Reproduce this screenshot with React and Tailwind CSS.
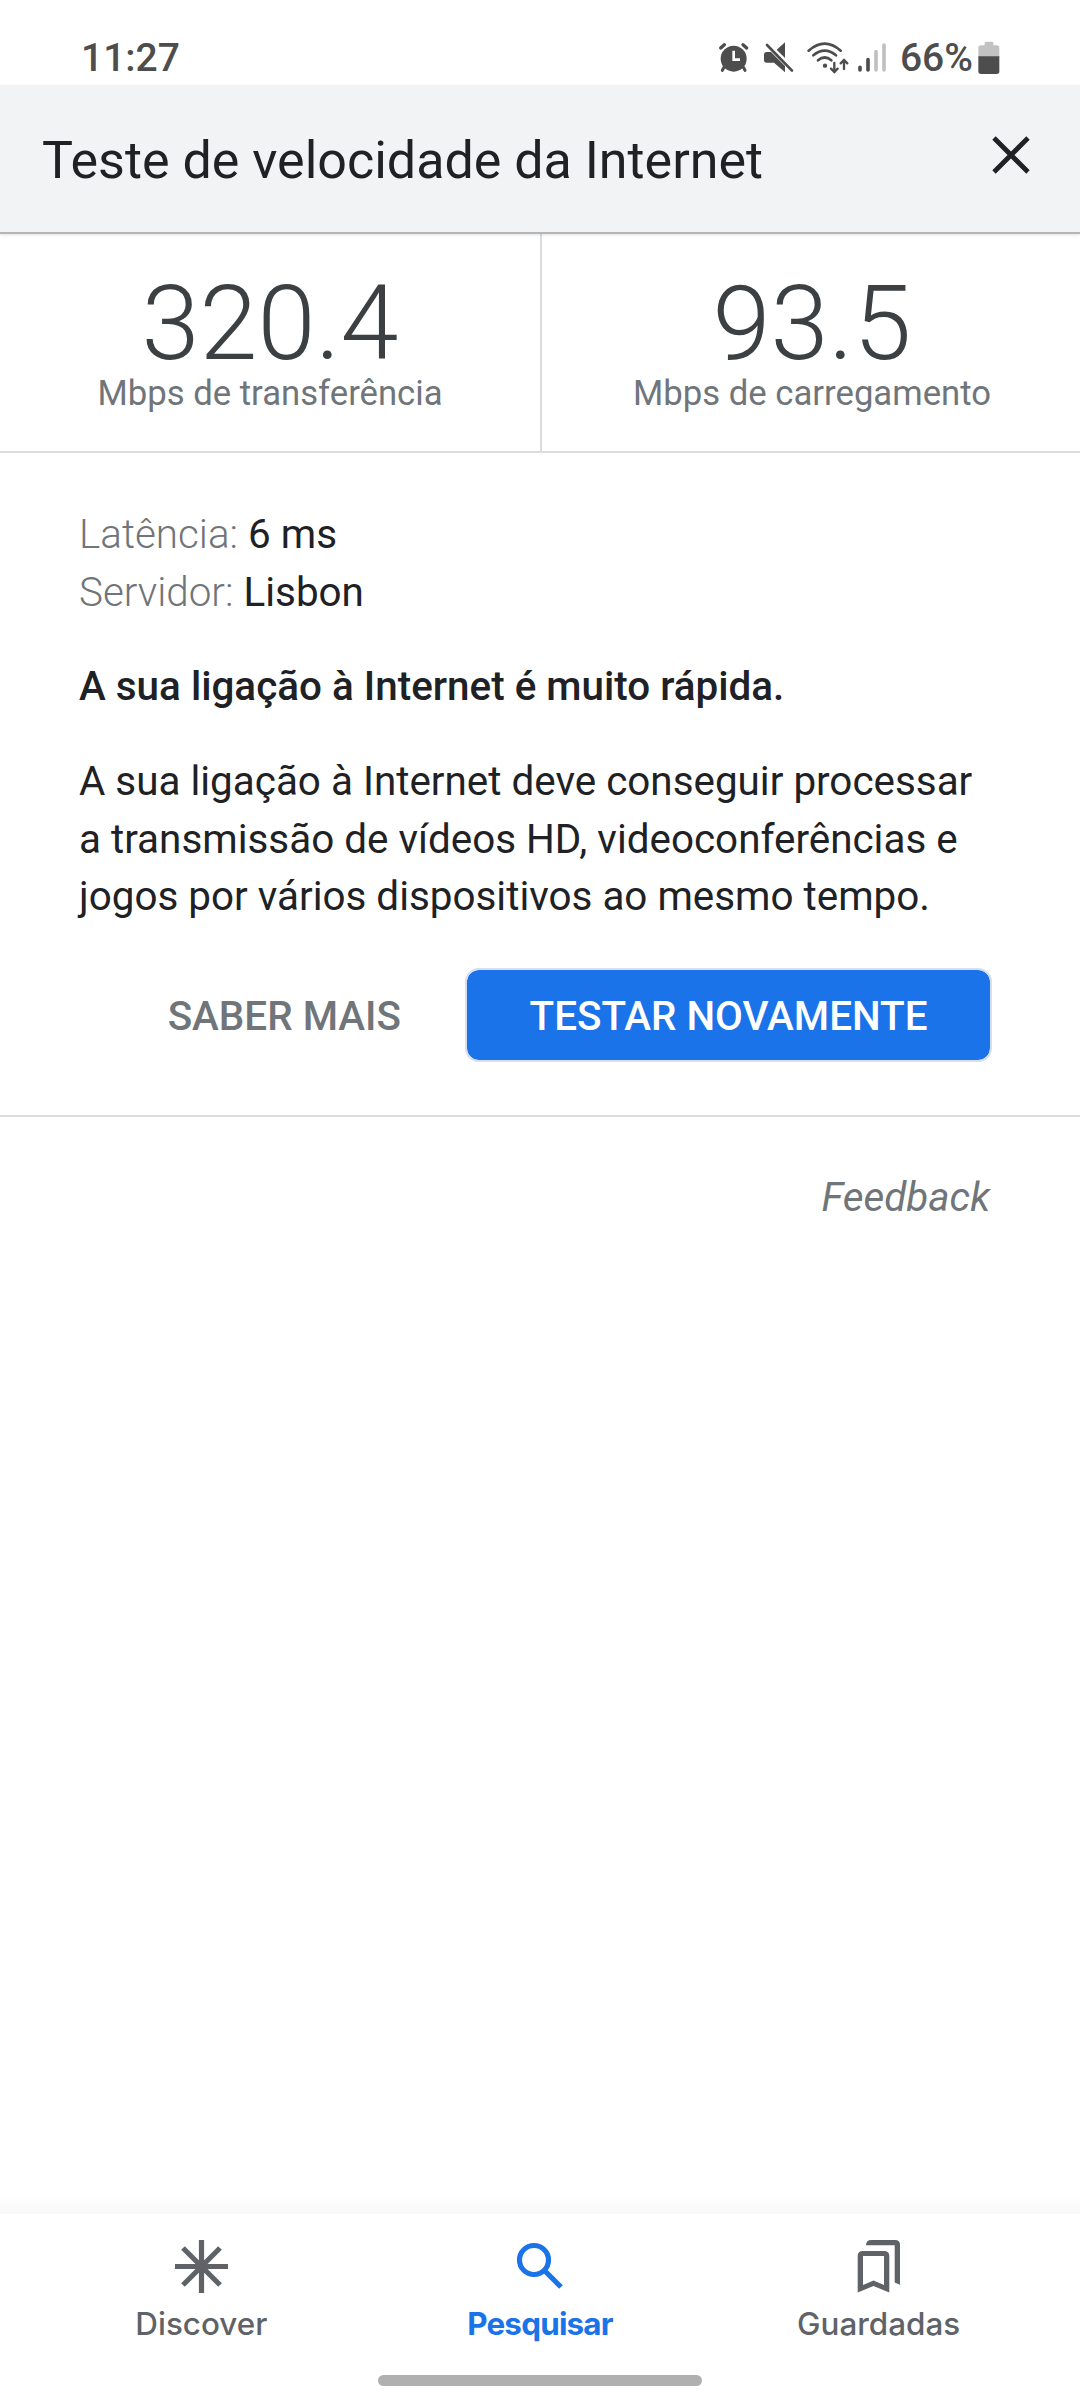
import React from 'react';

const StatusIcons = () => {
  return (
    <svg className="mt-[3px] h-[40px] w-[190px] text-[#4d4d4d]" viewBox="48 21 570 120" fill="none" stroke="currentColor">
      {/* Alarm */}
      <g strokeLinecap="round">
        <circle cx="98" cy="86" r="39" fill="currentColor" stroke="none" />
        <path d="M59 54L70 44M137 54L126 44" strokeWidth="10" />
        <path d="M69 112L64 121M127 112L132 121" strokeWidth="9" />
        <path d="M98 62V89H117" stroke="#fff" strokeWidth="8" strokeLinecap="butt" />
      </g>

      {/* Muted speaker */}
      <path d="M252 37V84L227 59Z" fill="currentColor" stroke="none" />
      <path d="M197 66H210L252 108V127L219 98H197Q189 98 189 90V74Q189 66 197 66Z" fill="currentColor" stroke="none" />
      <path d="M198 45L273 122" strokeWidth="8" strokeLinecap="round" />

      {/* Wifi */}
      <g strokeWidth="8" strokeLinecap="round">
        <path d="M323 62Q371 20 419 62" />
        <path d="M337 76Q371 48 405 76" />
        <path d="M351 91Q371 74 391 91" />
        <path d="M400 99V125M390 116L400 126L410 116" strokeWidth="7" />
        <path d="M429 117V91M419 100L429 90L439 100" strokeWidth="7" />
        <circle cx="372" cy="107" r="6.500" fill="currentColor" stroke="none" />
      </g>

      {/* Signal */}
      <g strokeWidth="11" strokeLinecap="round">
        <path d="M477 112V120M501 89V120" />
        <path d="M525 65V120M549 45V120" stroke="#c0c0c0" />
      </g>
    </svg>
  );
};

const Battery = () => {
  return (
    <svg className="ml-[5px] mt-[7px] h-[34px] w-[22px]" viewBox="0 0 66 102">
      <path d="M20 5Q20 2 25 2H41Q46 2 46 5V13H56Q64 13 64 21V48H1V21Q1 13 9 13H20Z" fill="#c2c2c2" />
      <path d="M1 46H64V91Q64 99 56 99H9Q1 99 1 91Z" fill="#4d4d4d" />
    </svg>
  );
};

const StatusBar = () => {
  return (
    <div className="flex h-[85px] items-start justify-between pl-[81px] pr-[80px] pt-[34px] text-[39px] font-medium leading-[48px] text-[#4d4d4d]">
      <span>11:27</span>
      <div className="flex items-start">
        <StatusIcons />
        <span className="-ml-[7px]">66%</span>
        <Battery />
      </div>
    </div>
  );
};

const Header = () => {
  return (
    <header className="relative flex h-[149px] justify-between border-b-2 border-[#b4b6ba] bg-[#f1f3f4] pl-[42px] pr-[50px] pt-[46px] shadow-[0_1px_3px_rgba(0,0,0,0.12)]">
      <h1 className="text-[52px] leading-[60px] text-[#202124]">Teste de velocidade da Internet</h1>
      <svg className="mt-[5px] h-[38px] w-[38px]" viewBox="0 0 38 38" stroke="#202124" strokeWidth="4.800">
        <path d="M2 2L36 36M36 2L2 36" />
      </svg>
    </header>
  );
};

const stats = [
  { value: '320.4', label: 'Mbps de transferência' },
  { value: '93.5', label: 'Mbps de carregamento' },
];

const Stats = () => {
  return (
    <div className="grid h-[219px] grid-cols-2 border-b-2 border-[#dadce0]">
      {stats.map((stat) => (
        <div key={stat.label} className="border-[#dadce0] pt-[41px] text-center last:border-l-2 last:pl-[2px]">
          <div className="text-[104.500px] font-light leading-[98px] text-[#3c4043]">{stat.value}</div>
          <div className="-mt-px text-[34.700px] leading-[42px] text-[#70757a]">{stat.label}</div>
        </div>
      ))}
    </div>
  );
};

const Result = () => {
  return (
    <section className="h-[664px] border-b-2 border-[#dadce0] pl-[79px] pr-[88px] pt-[53px] text-[40.400px] text-[#202124]">
      <div className="leading-[58px]">
        <p><span className="font-light text-[#70757a]">Latência:</span> 6 ms</p>
        <p><span className="font-light text-[#70757a]">Servidor:</span> Lisbon</p>
      </div>
      <p className="mt-[36px] font-medium leading-[58px]">A sua ligação à Internet é muito rápida.</p>
      <p className="mt-[37px] whitespace-nowrap leading-[57.500px]">
        A sua ligação à Internet deve conseguir processar<br />
        a transmissão de vídeos HD, videoconferências e<br />
        jogos por vários dispositivos ao mesmo tempo.
      </p>
      <div className="mt-[42.500px] flex justify-end font-medium">
        <button className="mr-[64px] h-[94px] pt-[4px] text-[#70757a]">SABER MAIS</button>
        <button className="h-[94px] w-[527px] rounded-[14px] border-2 border-[#d6dff0] bg-[#1a73e8] bg-clip-padding pt-[4px] text-white">
          TESTAR NOVAMENTE
        </button>
      </div>
    </section>
  );
};

const BottomNav = () => {
  return (
    <nav className="h-[186px] bg-white px-[32px] pt-[24px] text-[31.400px] font-medium text-[#5f6368]">
      <div className="grid grid-cols-3 font-[Inter]">
        <div className="flex flex-col items-center">
          <svg className="h-[56px] w-[56px]" viewBox="0 0 56 56" stroke="currentColor" strokeWidth="5.200">
            <path d="M28.500 2V55M2 28.500H55M10 10L47 47M47 10L10 47" />
          </svg>
          <span className="mt-[10px] leading-[40px]">Discover</span>
        </div>
        <div className="flex flex-col items-center text-[#1a73e8]">
          <svg className="h-[56px] w-[56px]" viewBox="0 0 56 56" fill="none" stroke="currentColor" strokeWidth="5.200">
            <circle cx="22" cy="22" r="14.500" />
            <path d="M32 32L49 49" />
          </svg>
          <span className="mt-[10px] font-bold leading-[40px] tracking-[-0.8px]">Pesquisar</span>
        </div>
        <div className="flex flex-col items-center">
          <svg className="h-[56px] w-[56px]" viewBox="0 0 56 56" fill="currentColor">
            <path fillRule="evenodd" d="M12 13H33Q38.300 13 38.300 18V54.600L22.500 48L6.700 54.600V18Q6.700 13 12 13ZM12 18V47L22.500 42.500L33 47V18Z" />
            <path d="M15 7.200Q15 2 20.500 2H44Q49 2 49 7V46.700L43.700 44.500V7.200Z" />
          </svg>
          <span className="mt-[10px] leading-[40px]">Guardadas</span>
        </div>
      </div>
      <div className="mx-auto mt-[31px] h-[11px] w-[324px] rounded-full bg-[#b0b0b0]" />
    </nav>
  );
};

export default function App() {
  return (
    <div className="flex h-[2400px] w-[1080px] flex-col overflow-hidden bg-white font-[Roboto,sans-serif]">
      <StatusBar />
      <Header />
      <Stats />
      <Result />
      <a className="mr-[90px] mt-[52px] self-end text-[40.400px] italic leading-[58px] text-[#70757a]">Feedback</a>
      <div className="mt-auto h-[20px] bg-linear-to-b from-white to-[#f8f8f8]" />
      <BottomNav />
    </div>
  );
}
